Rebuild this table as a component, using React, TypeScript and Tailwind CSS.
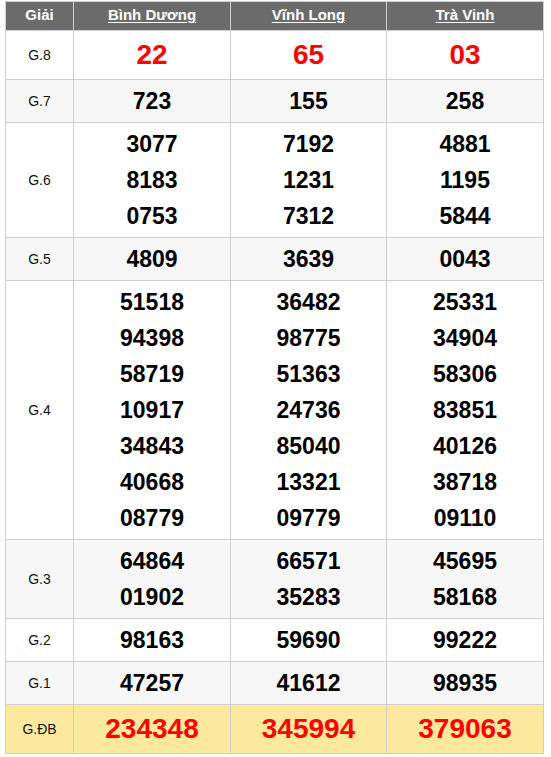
import React from "react";

const provinces = ["Bình Dương", "Vĩnh Long", "Trà Vinh"];

type Row = { label: string; cols: string[][]; big?: boolean; alt?: boolean; special?: boolean };

const rows: Row[] = [
  { label: "G.8", cols: [["22"], ["65"], ["03"]], big: true },
  { label: "G.7", cols: [["723"], ["155"], ["258"]], alt: true },
  { label: "G.6", cols: [["3077", "8183", "0753"], ["7192", "1231", "7312"], ["4881", "1195", "5844"]] },
  { label: "G.5", cols: [["4809"], ["3639"], ["0043"]], alt: true },
  {
    label: "G.4",
    cols: [
      ["51518", "94398", "58719", "10917", "34843", "40668", "08779"],
      ["36482", "98775", "51363", "24736", "85040", "13321", "09779"],
      ["25331", "34904", "58306", "83851", "40126", "38718", "09110"],
    ],
  },
  { label: "G.3", cols: [["64864", "01902"], ["66571", "35283"], ["45695", "58168"]], alt: true },
  { label: "G.2", cols: [["98163"], ["59690"], ["99222"]] },
  { label: "G.1", cols: [["47257"], ["41612"], ["98935"]], alt: true },
  { label: "G.ĐB", cols: [["234348"], ["345994"], ["379063"]], big: true, special: true },
];

export default function App() {
  return (
    <div className="bg-white w-[551px] h-[757px] pt-px pl-[5px]" style={{ fontFamily: '"Liberation Sans", Arial, sans-serif' }}>
      <table className="w-[538px] border-collapse table-fixed">
        <colgroup>
          <col className="w-[68px]" />
          <col className="w-[157px]" />
          <col className="w-[156px]" />
          <col className="w-[157px]" />
        </colgroup>
        <thead>
          <tr className="bg-[#6b6b6b]">
            <th className="border border-[#cfcfcf] text-white text-[15px] font-bold leading-[20px] pt-[3px] pb-[5px] text-center">Giải</th>
            {provinces.map((p) => (
              <th key={p} className="border border-[#cfcfcf] text-white text-[15px] font-bold leading-[20px] pt-[3px] pb-[5px] text-center">
                <span className="underline underline-offset-2">{p}</span>
              </th>
            ))}
          </tr>
        </thead>
        <tbody>
          {rows.map((r) => (
            <tr key={r.label} className={r.special ? "bg-[#fde99d]" : r.alt ? "bg-[#f7f7f7]" : "bg-white"}>
              <td className="border border-[#cfcfcf] text-center text-[14px] text-[#111]">{r.label}</td>
              {r.cols.map((c, i) => (
                <td key={i} className="border border-[#cfcfcf] text-center py-[3px]">
                  {c.map((n, j) => (
                    <div
                      key={j}
                      className={
                        r.big
                          ? "text-[28px] leading-[42px] font-bold text-[#ff0000]"
                          : "text-[23px] leading-[36px] font-bold text-black"
                      }
                    >
                      {n}
                    </div>
                  ))}
                </td>
              ))}
            </tr>
          ))}
        </tbody>
      </table>
    </div>
  );
}
